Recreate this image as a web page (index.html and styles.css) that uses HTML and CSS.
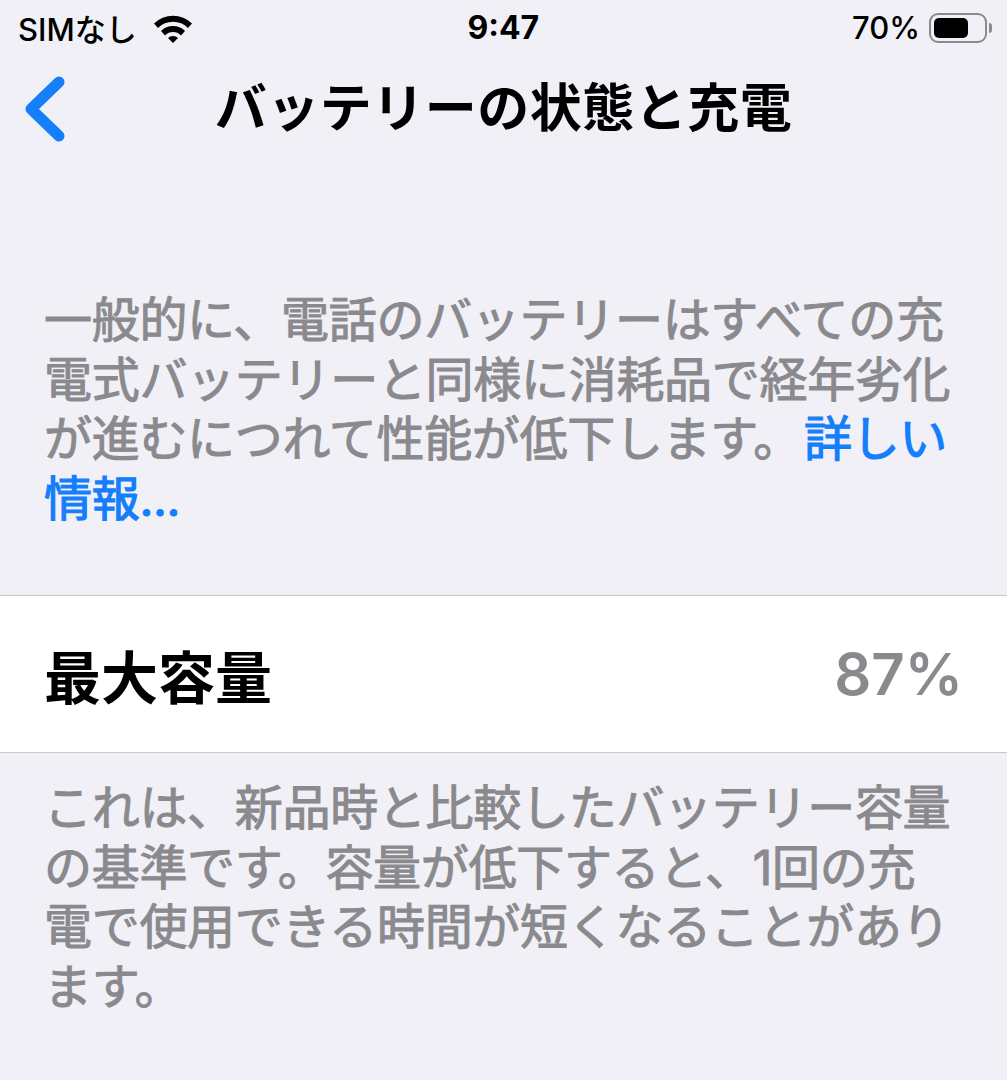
FILE: index.html
```html
<!DOCTYPE html>
<html lang="ja">
<head>
    <meta charset="UTF-8">
    <meta name="viewport" content="width=device-width, initial-scale=1.0">
    <title>バッテリーの状態と充電</title>
    <link rel="stylesheet" href="styles.css">
</head>
<body>
    <div class="status-bar">
        <div class="status-left">
            <span>SIMなし</span>
            <svg class="wifi" width="40" height="30" viewBox="0 0 40 30">
                <path d="M1 10.500 A27 27 0 0 1 39 10.500 L35 15 A21 21 0 0 0 5 15 Z" fill="#000"/>
                <path d="M8 18 A17 17 0 0 1 32 18 L28 22.500 A11 11 0 0 0 12 22.500 Z" fill="#000"/>
                <path d="M15 25 A7 7 0 0 1 25 25 L20 30 Z" fill="#000"/>
            </svg>
        </div>
        <div class="status-time">9:47</div>
        <div class="status-right">
            <span>70%</span>
            <div class="battery"><div class="battery-level"></div></div>
            <div class="battery-cap"></div>
        </div>
    </div>

    <div class="nav-bar">
        <svg class="back" width="44" height="68" viewBox="0 0 44 68">
            <path d="M35 7 L7 34 L35 61" fill="none" stroke="#147efb" stroke-width="11" stroke-linecap="round" stroke-linejoin="round"/>
        </svg>
        <h1>バッテリーの状態と充電</h1>
    </div>

    <p class="note intro">一般的に、電話のバッテリーはすべての充電式バッテリーと同様に消耗品で経年劣化が進むにつれて性能が低下します。<a href="#">詳しい情報...</a></p>

    <div class="row">
        <span class="row-label">最大容量</span>
        <span class="row-value">87%</span>
    </div>

    <p class="note detail">これは、新品時と比較したバッテリー容量の基準です。容量が低下すると、1回の充電で使用できる時間が短くなることがあります。</p>
</body>
</html>
```

FILE: styles.css
```css
body {
    margin: 0;
    height: 1080px;
    overflow: hidden;
    background-color: #f0f0f6;
    color: #000;
    font-family: Inter, "Noto Sans CJK JP", sans-serif;
}
.status-bar {
    display: flex;
    justify-content: space-between;
    align-items: center;
    height: 55px;
    padding: 0 15px 1px 18px;
    font-size: 31px;
    font-weight: 500;
}
.status-left {
    display: flex;
    align-items: center;
    gap: 16px;
}
.status-time {
    font-weight: bold;
    font-size: 32px;
    margin-left: -38px;
}
.status-right {
    display: flex;
    align-items: center;
}
.battery {
    width: 58px;
    height: 30px;
    margin-left: 9px;
    padding: 3px;
    box-sizing: border-box;
    border: 2px solid #8a8a8e;
    border-radius: 9px;
}
.battery-level {
    width: 70%;
    height: 100%;
    background-color: #000;
    border-radius: 5px;
}
.battery-cap {
    width: 3px;
    height: 10px;
    margin-left: 2px;
    background-color: #8a8a8e;
    border-radius: 0 3px 3px 0;
}
.nav-bar {
    display: flex;
    align-items: center;
    justify-content: center;
    height: 106px;
    position: relative;
}
.back {
    position: absolute;
    left: 24px;
    top: 19px;
}
h1 {
    margin: 0 0 10px;
    font-size: 52px;
    letter-spacing: 0.500px;
    font-weight: bold;
}
.note {
    margin: 0;
    padding: 0 44px;
    font-size: 48px;
    line-height: 59.500px;
    letter-spacing: -0.300px;
    color: #8a8a8e;
    -webkit-text-stroke: 1px #8a8a8e;
}
.intro {
    padding-top: 128px;
    padding-bottom: 67px;
}
.detail {
    padding-right: 50px;
}
.note a {
    margin-left: 3px;
    color: #147efb;
    text-decoration: none;
    -webkit-text-stroke: 1.200px #147efb;
}
.row {
    display: flex;
    justify-content: space-between;
    align-items: center;
    height: 156px;
    padding: 0 44px;
    background-color: #fff;
    border-top: 1px solid #c8c8cc;
    border-bottom: 1px solid #c8c8cc;
    margin-bottom: 25px;
}
.row-label {
    font-size: 57px;
    font-weight: bold;
}
.row-value {
    font-size: 58px;
    font-weight: 600;
    color: #8a8a8e;
}
```
